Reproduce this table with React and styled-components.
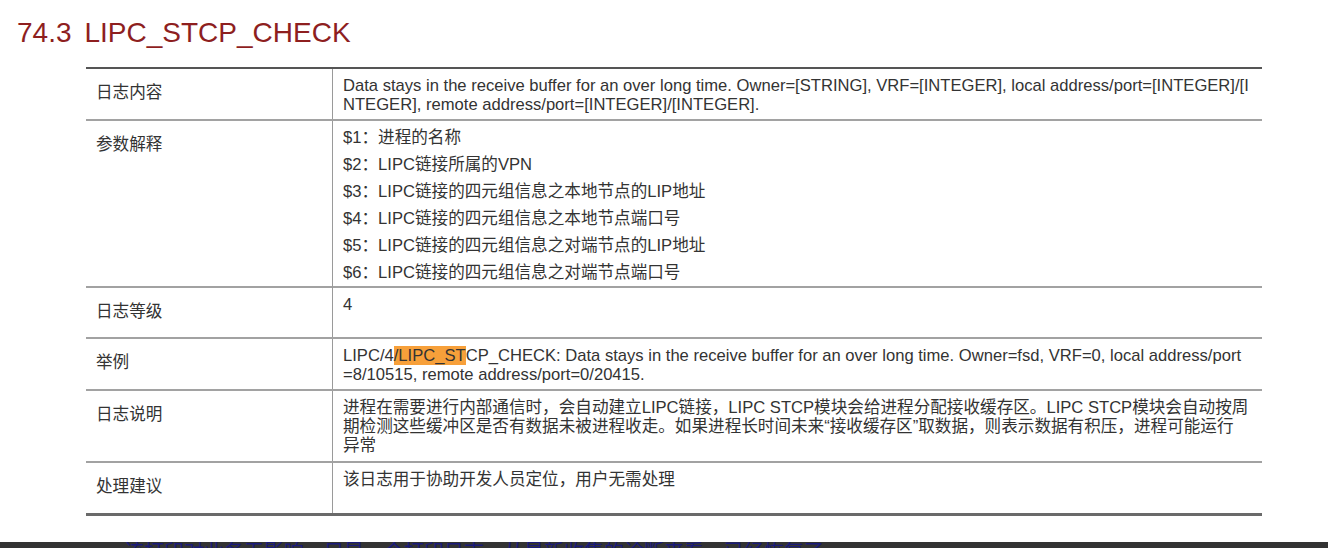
import React from "react";
import styled, { createGlobalStyle } from "styled-components";

const GlobalStyle = createGlobalStyle`
  body {
    margin: 0;
    background: #fff;
  }
`;

const SPage = styled.div`
  width: 1328px;
  height: 548px;
  overflow: hidden;
  font-family: "Liberation Sans", Arial, "Noto Sans CJK SC", sans-serif;
  color: #333;
`;

const STitle = styled.h2`
  margin: 0;
  padding: 17px 0 0 17px;
  font-size: 28px;
  font-weight: 400;
  line-height: 32px;
  color: #8e1f1f;
  white-space: nowrap;

  span {
    margin-right: 13px;
  }
`;

const STable = styled.div`
  margin: 18px 0 0 86px;
  width: 1176px;
  border-bottom: 3px solid #6a6a6a;
`;

const SRow = styled.div`
  display: grid;
  grid-template-columns: 246px 1fr;
  box-sizing: border-box;
  height: ${({ $height }) => $height}px;
  border-top: 2px solid ${({ $first }) => ($first ? "#555" : "#a2a2a2")};
`;

const SLabel = styled.div`
  padding: 14px 10px 0;
  font-size: 16.6px;
  line-height: 19px;
  white-space: nowrap;
`;

const SContent = styled.div`
  border-left: 1px solid #9a9a9a;
  padding: 7px 10px 0;
  font-size: 16.6px;
`;

const SLine = styled.div`
  height: 19px;
  line-height: 19px;
  white-space: nowrap;
`;

const SParam = styled(SLine)`
  margin-bottom: 8px;
`;

const SMark = styled.span`
  background: #f7a03a;
`;

const SBottomBar = styled.div`
  margin-top: 26px;
  height: 6px;
  overflow: hidden;
  padding-left: 124px;
  background: #333;
  color: #1b1b78;
  font-size: 20px;
  line-height: 20px;
  white-space: nowrap;
`;

const params = [
  "$1：进程的名称",
  "$2：LIPC链接所属的VPN",
  "$3：LIPC链接的四元组信息之本地节点的LIP地址",
  "$4：LIPC链接的四元组信息之本地节点端口号",
  "$5：LIPC链接的四元组信息之对端节点的LIP地址",
  "$6：LIPC链接的四元组信息之对端节点端口号",
];

const Row = ({ label, height, first, children }) => (
  <SRow $height={height} $first={first}>
    <SLabel>{label}</SLabel>
    <SContent>{children}</SContent>
  </SRow>
);

const App = () => (
  <SPage>
    <GlobalStyle />
    <STitle>
      <span>74.3</span>LIPC_STCP_CHECK
    </STitle>
    <STable>
      <Row label="日志内容" height={52} first>
        <SLine>
          Data stays in the receive buffer for an over long time. Owner=[STRING], VRF=[INTEGER], local address/port=[INTEGER]/[I
        </SLine>
        <SLine>NTEGER], remote address/port=[INTEGER]/[INTEGER].</SLine>
      </Row>
      <Row label="参数解释" height={167}>
        {params.map((p) => (
          <SParam key={p}>{p}</SParam>
        ))}
      </Row>
      <Row label="日志等级" height={51}>
        <SLine>4</SLine>
      </Row>
      <Row label="举例" height={52}>
        <SLine>
          LIPC/4<SMark>/LIPC_ST</SMark>CP_CHECK: Data stays in the receive buffer for an over long time. Owner=fsd, VRF=0, local address/port
        </SLine>
        <SLine>=8/10515, remote address/port=0/20415.</SLine>
      </Row>
      <Row label="日志说明" height={72}>
        <SLine>
          进程在需要进行内部通信时，会自动建立LIPC链接，LIPC STCP模块会给进程分配接收缓存区。LIPC STCP模块会自动按周
        </SLine>
        <SLine>
          期检测这些缓冲区是否有数据未被进程收走。如果进程长时间未来“接收缓存区”取数据，则表示数据有积压，进程可能运行
        </SLine>
        <SLine>异常</SLine>
      </Row>
      <Row label="处理建议" height={52}>
        <SLine>该日志用于协助开发人员定位，用户无需处理</SLine>
      </Row>
    </STable>
    <SBottomBar>
      该打印对业务无影响，只是一个打印日志，从最新收集的诊断来看，已经恢复了
    </SBottomBar>
  </SPage>
);

export default App;
